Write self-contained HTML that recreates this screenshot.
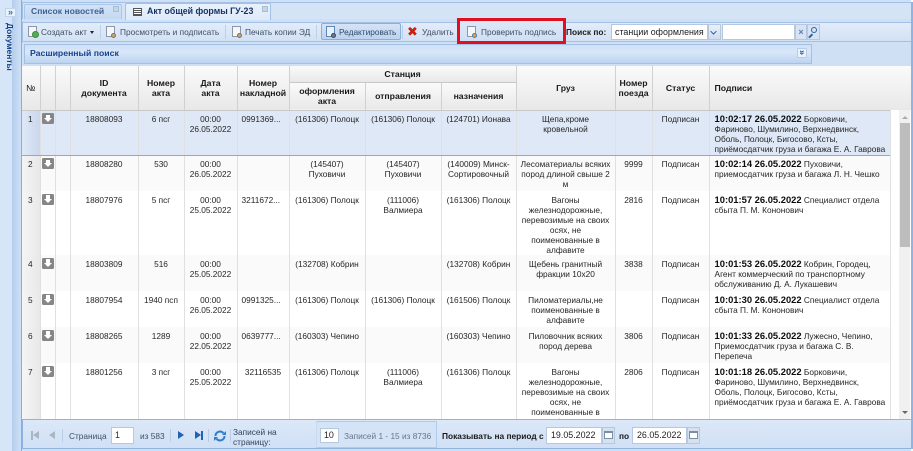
<!DOCTYPE html>
<html lang="ru"><head><meta charset="utf-8">
<style>
html,body{margin:0;padding:0;width:913px;height:451px;overflow:hidden;background:#fff}
#p{position:relative;width:913px;height:451px;overflow:hidden;background:#cfe0f5;font:8.3px/10px "Liberation Sans",sans-serif;color:#2b2b2b;filter:blur(.25px)}
.a{position:absolute;white-space:nowrap}
#grid{position:absolute;left:22px;top:66px;width:869px;height:354px;overflow:hidden;background:#fff}
table{border-collapse:collapse;table-layout:fixed;width:868px;position:absolute;left:0;top:0}
td{border-right:1.5px solid #e0e0e0;padding:3.5px 2px 0;vertical-align:top;text-align:center;white-space:nowrap;overflow:hidden;color:#262626;font-size:8.3px;line-height:10px}
tr.h td{background:linear-gradient(#fafafa,#e8e8e8);border-right:1px solid #d0d0d0;border-bottom:1px solid #c8c8c8;font-weight:bold;font-size:8.7px;color:#1a1a1a;vertical-align:middle;padding:0 1px}
td.n{background:linear-gradient(90deg,#f6f6f6,#e8e8e8);padding-left:0;text-align:left;text-indent:6px}
td.l{text-align:left;padding:3.5px 2px 0 5px}
td.k{text-align:left;padding-left:4px}
td b{color:#0c0c0c;font-size:9.4px}
tr.s td{background:#dfe8f6;border-top:1px solid #a5a5a5;border-bottom:1px solid #a5a5a5}
tr.s td.n{background:linear-gradient(90deg,#dfe8f6,#c9d7ec)}
tr.alt td{background:#fafafa}
tr.alt td.n{background:linear-gradient(90deg,#f4f4f4,#e8e8e8)}
td.d{padding:3.5px 0 0}
.dl{display:block;width:12px;height:11px;background:#868686;border-radius:1.5px;margin:-1px 0 0 1px;position:relative;text-indent:0}
.dl:after{content:"";position:absolute;left:4px;top:1.5px;width:4px;height:3.5px;background:#fff}
.dl:before{content:"";position:absolute;left:2px;top:5px;border:4px solid transparent;border-top:4px solid #fff;border-bottom:0}
.bar{position:absolute;background:linear-gradient(#dce8f7,#c9dbf2);border:1px solid #a3c1e6;box-sizing:border-box}
.t{color:#3f4f65}
.sep{position:absolute;width:1px;height:14px;top:25px;background:#bcd0e8}
.ico{position:absolute;width:9px;height:11px;background:#f4f6f8;border:1px solid #8a98a8;box-sizing:border-box}
.ico i{position:absolute;right:-2px;bottom:-2px;width:5px;height:5px;border-radius:50%;background:#e8a13a;border:1px solid #4d7cb0;box-sizing:border-box}
.inp{position:absolute;background:#fff;border:1px solid #b5c8de;box-sizing:border-box;padding:0 3px;color:#222;white-space:nowrap;overflow:hidden;font-size:8.9px}
.bb{font-weight:bold;font-size:8.35px;color:#1a1a1a}
</style></head><body>
<div id="p">
<!-- left collapsed panel -->
<div class="a" style="left:0;top:0;width:13px;height:451px;background:#d6e5f7;border-right:1px solid #b5cde9;box-sizing:border-box"></div>
<div class="a" style="left:13px;top:0;width:8px;height:451px;background:linear-gradient(90deg,#b6d0f0,#cfe0f6);border-right:1px solid #86ade0;box-sizing:content-box"></div>
<div class="a" style="left:5px;top:8px;width:11px;height:9px;background:#eaf2fb;border:1px solid #c0d4ec;box-sizing:border-box;color:#3b6ea8;font:bold 9px/7px 'Liberation Sans',sans-serif;text-align:center">»</div>
<div class="a" style="left:3px;top:23px;width:14px;height:50px;font:bold 8.5px/14px 'Liberation Sans',sans-serif;color:#15428b;writing-mode:vertical-rl">Документы</div>

<!-- tabs -->
<div class="a" style="left:22px;top:2px;width:890px;height:17px;background:#d4e3f6;border:1px solid #a3c1e6;border-bottom:0;box-sizing:border-box"></div>
<div class="a" style="left:24px;top:4px;width:98px;height:15px;background:linear-gradient(#d3e3f7,#c4d8f2);border:1px solid #a9c5e8;border-bottom:0;border-radius:2px 2px 0 0;box-sizing:border-box"></div>
<div class="a" style="left:31px;top:6px;font:bold 8.6px/11px 'Liberation Sans',sans-serif;color:#3e5f8f">Список новостей</div>
<div class="a" style="left:113px;top:6px;width:6px;height:6px;background:#c5d5e8;border:1px solid #a8bcd4;box-sizing:border-box"></div>
<div class="a" style="left:125px;top:3px;width:146px;height:17px;background:linear-gradient(#e8f1fb,#deeafa);border:1px solid #a3c1e6;border-bottom:0;border-radius:2px 2px 0 0;box-sizing:border-box"></div>
<div class="a" style="left:133px;top:8px;width:9px;height:8px;border:1px solid #555;box-sizing:border-box;background:repeating-linear-gradient(#fff 0 1px,#555 1px 2px)"></div>
<div class="a" style="left:147px;top:6px;font:bold 8.8px/11px 'Liberation Sans',sans-serif;color:#15325f">Акт общей формы ГУ-23</div>
<div class="a" style="left:262px;top:6px;width:6px;height:6px;background:#c5d5e8;border:1px solid #a8bcd4;box-sizing:border-box"></div>

<!-- toolbar -->
<div class="bar" style="left:22px;top:22px;width:890px;height:20px;background:linear-gradient(#e2ecf9,#d2e1f5)"></div>
<div class="ico" style="left:28px;top:26px"><i style="background:#4fb04f;border-color:#3a8a3a;width:7px;height:7px;right:-3px;bottom:-2px"></i></div>
<div class="a t" style="left:41px;top:27px">Создать акт</div>
<div class="a" style="left:90px;top:31px;border:2.5px solid transparent;border-top:3px solid #222;border-bottom:0"></div>
<div class="sep" style="left:100px"></div>
<div class="ico" style="left:106px;top:26px"><i></i></div>
<div class="a t" style="left:120px;top:27px">Просмотреть и подписать</div>
<div class="sep" style="left:225px"></div>
<div class="ico" style="left:232px;top:26px"><i></i></div>
<div class="a t" style="left:245px;top:27px">Печать копии ЭД</div>
<div class="sep" style="left:316px"></div>
<div class="a" style="left:321px;top:23px;width:80px;height:17px;background:linear-gradient(#d5e3f5,#bcd2ee);border:1px solid #88aed9;border-radius:2px;box-sizing:border-box"></div>
<div class="ico" style="left:326px;top:26px;background:#e8f1fb;border-color:#5c88b8"><i style="background:#6a7d90;border-color:#445"></i></div>
<div class="a t" style="left:339px;top:27px;color:#2e4a6b">Редактировать</div>
<div class="sep" style="left:402px"></div>
<div class="a" style="left:407px;top:25px;font:bold 13px/15px 'DejaVu Sans',sans-serif;color:#cc1f10">✖</div>
<div class="a t" style="left:422px;top:27px">Удалить</div>
<div class="a" style="left:457px;top:18px;width:109px;height:26px;border:3px solid #e01020;box-sizing:border-box;background:linear-gradient(#dde8f7,#cfdff4)"></div>
<div class="ico" style="left:467px;top:26px"><i></i></div>
<div class="a t" style="left:481px;top:27px">Проверить подпись</div>
<div class="a bb" style="left:566px;top:27px">Поиск по:</div>
<div class="inp" style="left:611px;top:24px;width:97px;height:16px;line-height:14px">станции оформления</div>
<div class="a" style="left:708px;top:24px;width:13px;height:16px;background:linear-gradient(#e8f0fa,#cfddef);border:1px solid #b5c8de;box-sizing:border-box"></div>
<div class="a" style="left:711px;top:30px;width:4px;height:4px;border-right:1.5px solid #24508a;border-bottom:1.5px solid #24508a;transform:rotate(45deg) scale(.9);margin-top:-1px"></div>
<div class="inp" style="left:722px;top:24px;width:73px;height:16px"></div>
<div class="a" style="left:795px;top:24px;width:12px;height:16px;background:#d7e3f2;border:1px solid #b5c8de;box-sizing:border-box;font:bold 9px/14px 'Liberation Sans',sans-serif;color:#5b7ea8;text-align:center">×</div>
<div class="a" style="left:807px;top:24px;width:13px;height:16px;background:#d7e3f2;border:1px solid #b5c8de;box-sizing:border-box"></div>
<div class="a" style="left:811px;top:27px;width:6px;height:6px;border:1.5px solid #2a62a8;border-radius:50%;box-sizing:border-box"></div>
<div class="a" style="left:808px;top:35px;width:5px;height:1.5px;background:#2a62a8;transform:rotate(-45deg)"></div>

<!-- search panel -->
<div class="bar" style="left:24px;top:44px;width:788px;height:20px;background:linear-gradient(#cfe0f6 0,#d9e7f9 40%,#bcd3f0 100%)"></div>
<div class="a" style="left:30px;top:48px;font:bold 8.7px/11px 'Liberation Sans',sans-serif;color:#15428b">Расширенный поиск</div>
<div class="a" style="left:797px;top:48px;width:10px;height:10px;background:#eaf2fb;border:1px solid #b6cce6;box-sizing:border-box;border-radius:1px;font:bold 9px/7px 'Liberation Sans',sans-serif;color:#2a5a98;text-align:center;transform-origin:center"><span style="display:block;transform:rotate(90deg)">»</span></div>

<!-- grid -->
<div id="grid">
<table>
<colgroup><col style="width:18px"><col style="width:15px"><col style="width:15px"><col style="width:68px"><col style="width:46px"><col style="width:53px"><col style="width:52px"><col style="width:76px"><col style="width:76px"><col style="width:75px"><col style="width:99px"><col style="width:37px"><col style="width:57px"><col style="width:181px"></colgroup>
<tr class="h" style="height:16px">
<td rowspan="2" style="font-weight:normal">№</td><td rowspan="2"></td><td rowspan="2"></td>
<td rowspan="2">ID<br>документа</td><td rowspan="2">Номер<br>акта</td><td rowspan="2">Дата<br>акта</td><td rowspan="2">Номер<br>накладной</td>
<td colspan="3">Станция</td>
<td rowspan="2">Груз</td><td rowspan="2">Номер<br>поезда</td><td rowspan="2">Статус</td><td rowspan="2" style="text-align:left;padding-left:5px">Подписи</td>
</tr>
<tr class="h" style="height:28px"><td>оформления<br>акта</td><td>отправления</td><td>назначения</td></tr>

<tr class="s" style="height:45px"><td class="n">1</td><td class="d"><span class="dl"></span></td><td></td><td>18808093</td><td>6 пcг</td><td>00:00<br>26.05.2022</td><td class="k">0991369...</td><td>(161306) Полоцк</td><td>(161306) Полоцк</td><td>(124701) Ионава</td><td>Щепа,кроме<br>кровельной</td><td></td><td>Подписан</td><td class="l"><b>10:02:17 26.05.2022</b> Борковичи,<br>Фариново, Шумилино, Верхнедвинск,<br>Оболь, Полоцк, Бигосово, Ксты,<br>приёмосдатчик груза и багажа Е. А. Гаврова</td></tr>

<tr class="alt" style="height:36px"><td class="n">2</td><td class="d"><span class="dl"></span></td><td></td><td>18808280</td><td>530</td><td>00:00<br>26.05.2022</td><td></td><td>(145407)<br>Пуховичи</td><td>(145407)<br>Пуховичи</td><td>(140009) Минск-<br>Сортировочный</td><td>Лесоматериалы всяких<br>пород длиной свыше 2<br>м</td><td>9999</td><td>Подписан</td><td class="l"><b>10:02:14 26.05.2022</b> Пуховичи,<br>приемосдатчик груза и багажа Л. Н. Чешко</td></tr>

<tr style="height:64px"><td class="n">3</td><td class="d"><span class="dl"></span></td><td></td><td>18807976</td><td>5 пcг</td><td>00:00<br>25.05.2022</td><td class="k">3211672...</td><td>(161306) Полоцк</td><td>(111006)<br>Валмиера</td><td>(161306) Полоцк</td><td>Вагоны<br>железнодорожные,<br>перевозимые на своих<br>осях, не<br>поименованные в<br>алфавите</td><td>2816</td><td>Подписан</td><td class="l"><b>10:01:57 26.05.2022</b> Специалист отдела<br>сбыта П. М. Кононович</td></tr>

<tr class="alt" style="height:36px"><td class="n">4</td><td class="d"><span class="dl"></span></td><td></td><td>18803809</td><td>516</td><td>00:00<br>25.05.2022</td><td></td><td>(132708) Кобрин</td><td></td><td>(132708) Кобрин</td><td>Щебень гранитный<br>фракции 10х20</td><td>3838</td><td>Подписан</td><td class="l"><b>10:01:53 26.05.2022</b> Кобрин, Городец,<br>Агент коммерческий по транспортному<br>обслуживанию Д. А. Лукашевич</td></tr>

<tr style="height:36px"><td class="n">5</td><td class="d"><span class="dl"></span></td><td></td><td>18807954</td><td>1940 псп</td><td>00:00<br>26.05.2022</td><td class="k">0991325...</td><td>(161306) Полоцк</td><td>(161306) Полоцк</td><td>(161506) Полоцк</td><td>Пиломатериалы,не<br>поименованные в<br>алфавите</td><td></td><td>Подписан</td><td class="l"><b>10:01:30 26.05.2022</b> Специалист отдела<br>сбыта П. М. Кононович</td></tr>

<tr class="alt" style="height:36px"><td class="n">6</td><td class="d"><span class="dl"></span></td><td></td><td>18808265</td><td>1289</td><td>00:00<br>22.05.2022</td><td class="k">0639777...</td><td>(160303) Чепино</td><td></td><td>(160303) Чепино</td><td>Пиловочник всяких<br>пород дерева</td><td>3806</td><td>Подписан</td><td class="l"><b>10:01:33 26.05.2022</b> Лужесно, Чепино,<br>Приемосдатчик груза и багажа С. В.<br>Перепеча</td></tr>

<tr style="height:70px"><td class="n">7</td><td class="d"><span class="dl"></span></td><td></td><td>18801256</td><td>3 пcг</td><td>00:00<br>25.05.2022</td><td>32116535</td><td>(161306) Полоцк</td><td>(111006)<br>Валмиера</td><td>(161306) Полоцк</td><td>Вагоны<br>железнодорожные,<br>перевозимые на своих<br>осях, не<br>поименованные в<br>алфавите</td><td>2806</td><td>Подписан</td><td class="l"><b>10:01:18 26.05.2022</b> Борковичи,<br>Фариново, Шумилино, Верхнедвинск,<br>Оболь, Полоцк, Бигосово, Ксты,<br>приёмосдатчик груза и багажа Е. А. Гаврова</td></tr>
</table>
</div>

<!-- scrollbar -->
<div class="a" style="left:890px;top:66px;width:21px;height:44px;background:linear-gradient(#fafafa,#e8e8e8)"></div>
<div class="a" style="left:890px;top:110px;width:21px;height:310px;background:#fff;border-left:1px solid #e0e0e0;box-sizing:border-box"></div>
<div class="a" style="left:899px;top:110px;width:11px;height:310px;background:#f0f0f0"></div>
<div class="a" style="left:900px;top:123px;width:10px;height:124px;background:#bdbdbd"></div>
<div class="a" style="left:902px;top:116px;border:3px solid transparent;border-bottom:3px solid #aaa;border-top:0"></div>
<div class="a" style="left:902px;top:411px;border:3px solid transparent;border-top:3px solid #666;border-bottom:0"></div>
<div class="a" style="left:911px;top:0;width:2px;height:451px;background:#fff"></div>
<div class="a" style="left:911px;top:2px;width:1.5px;height:447px;background:#8fb3e3"></div>

<!-- pager -->
<div class="bar" style="left:22px;top:419px;width:890px;height:30px;background:linear-gradient(#dce8f8,#d0e0f5);border-color:#8fb3e3"></div>
<div class="a" style="left:31px;top:431px;width:2px;height:9px;background:#a9b6c4"></div>
<div class="a" style="left:33px;top:431px;border:4.5px solid transparent;border-right:6px solid #a9b6c4;border-left:0"></div>
<div class="a" style="left:49px;top:431px;border:4.5px solid transparent;border-right:6px solid #a9b6c4;border-left:0"></div>
<div class="a" style="left:62px;top:429px;width:1px;height:13px;background:#b9cde6"></div>
<div class="a t" style="left:69px;top:431px">Страница</div>
<div class="inp" style="left:111px;top:427px;width:23px;height:17px;line-height:15px;color:#4a1a1a">1</div>
<div class="a t" style="left:140px;top:431px">из 583</div>
<div class="a" style="left:170px;top:429px;width:1px;height:13px;background:#b9cde6"></div>
<div class="a" style="left:178px;top:431px;border:4.5px solid transparent;border-left:6px solid #1f62b8;border-right:0"></div>
<div class="a" style="left:195px;top:431px;border:4.5px solid transparent;border-left:6px solid #1f62b8;border-right:0"></div>
<div class="a" style="left:201px;top:431px;width:2px;height:9px;background:#1f62b8"></div>
<div class="a" style="left:208px;top:429px;width:1px;height:13px;background:#b9cde6"></div>
<svg class="a" style="left:214px;top:430px" width="12" height="12" viewBox="0 0 12 12" fill="none"><path d="M1.5 6A4.5 4.5 0 0 1 9.5 3.2" stroke="#2f7fc8" stroke-width="2"/><path d="M10.5 6A4.5 4.5 0 0 1 2.5 8.8" stroke="#2f7fc8" stroke-width="2"/><path d="M8 5h4V1z" fill="#2f7fc8"/><path d="M4 7H0v4z" fill="#2f7fc8"/></svg>
<div class="a" style="left:230px;top:429px;width:1px;height:13px;background:#b9cde6"></div>
<div class="a t" style="left:233px;top:427px;line-height:10px;color:#33435a">Записей на<br>страницу:</div>
<div class="a" style="left:316px;top:421px;width:121px;height:27px;border:1px solid #b0cbec;border-left-color:#c8daf1;box-sizing:border-box;background:#d5e3f6"></div>
<div class="inp" style="left:320px;top:428px;width:19px;height:15px;line-height:13px">10</div>
<div class="a" style="left:344px;top:431px;color:#66768c">Записей 1 - 15 из 8736</div>
<div class="a bb" style="left:442px;top:431px">Показывать на период с</div>
<div class="inp" style="left:546px;top:427px;width:56px;height:17px;line-height:15px;padding-left:4px">19.05.2022</div>
<div class="a" style="left:602px;top:427px;width:13px;height:17px;background:#d5e1ef;border:1px solid #b5c8de;box-sizing:border-box"></div>
<div class="a" style="left:604px;top:431px;width:9px;height:8px;background:#fff;border:1px solid #7b8ea5;border-top:2px solid #7b8ea5;box-sizing:border-box"></div>
<div class="a bb" style="left:619px;top:431px">по</div>
<div class="inp" style="left:632px;top:427px;width:55px;height:17px;line-height:15px;padding-left:4px">26.05.2022</div>
<div class="a" style="left:687px;top:427px;width:13px;height:17px;background:#d5e1ef;border:1px solid #b5c8de;box-sizing:border-box"></div>
<div class="a" style="left:689px;top:431px;width:9px;height:8px;background:#fff;border:1px solid #7b8ea5;border-top:2px solid #7b8ea5;box-sizing:border-box"></div>
</div>
</body></html>
